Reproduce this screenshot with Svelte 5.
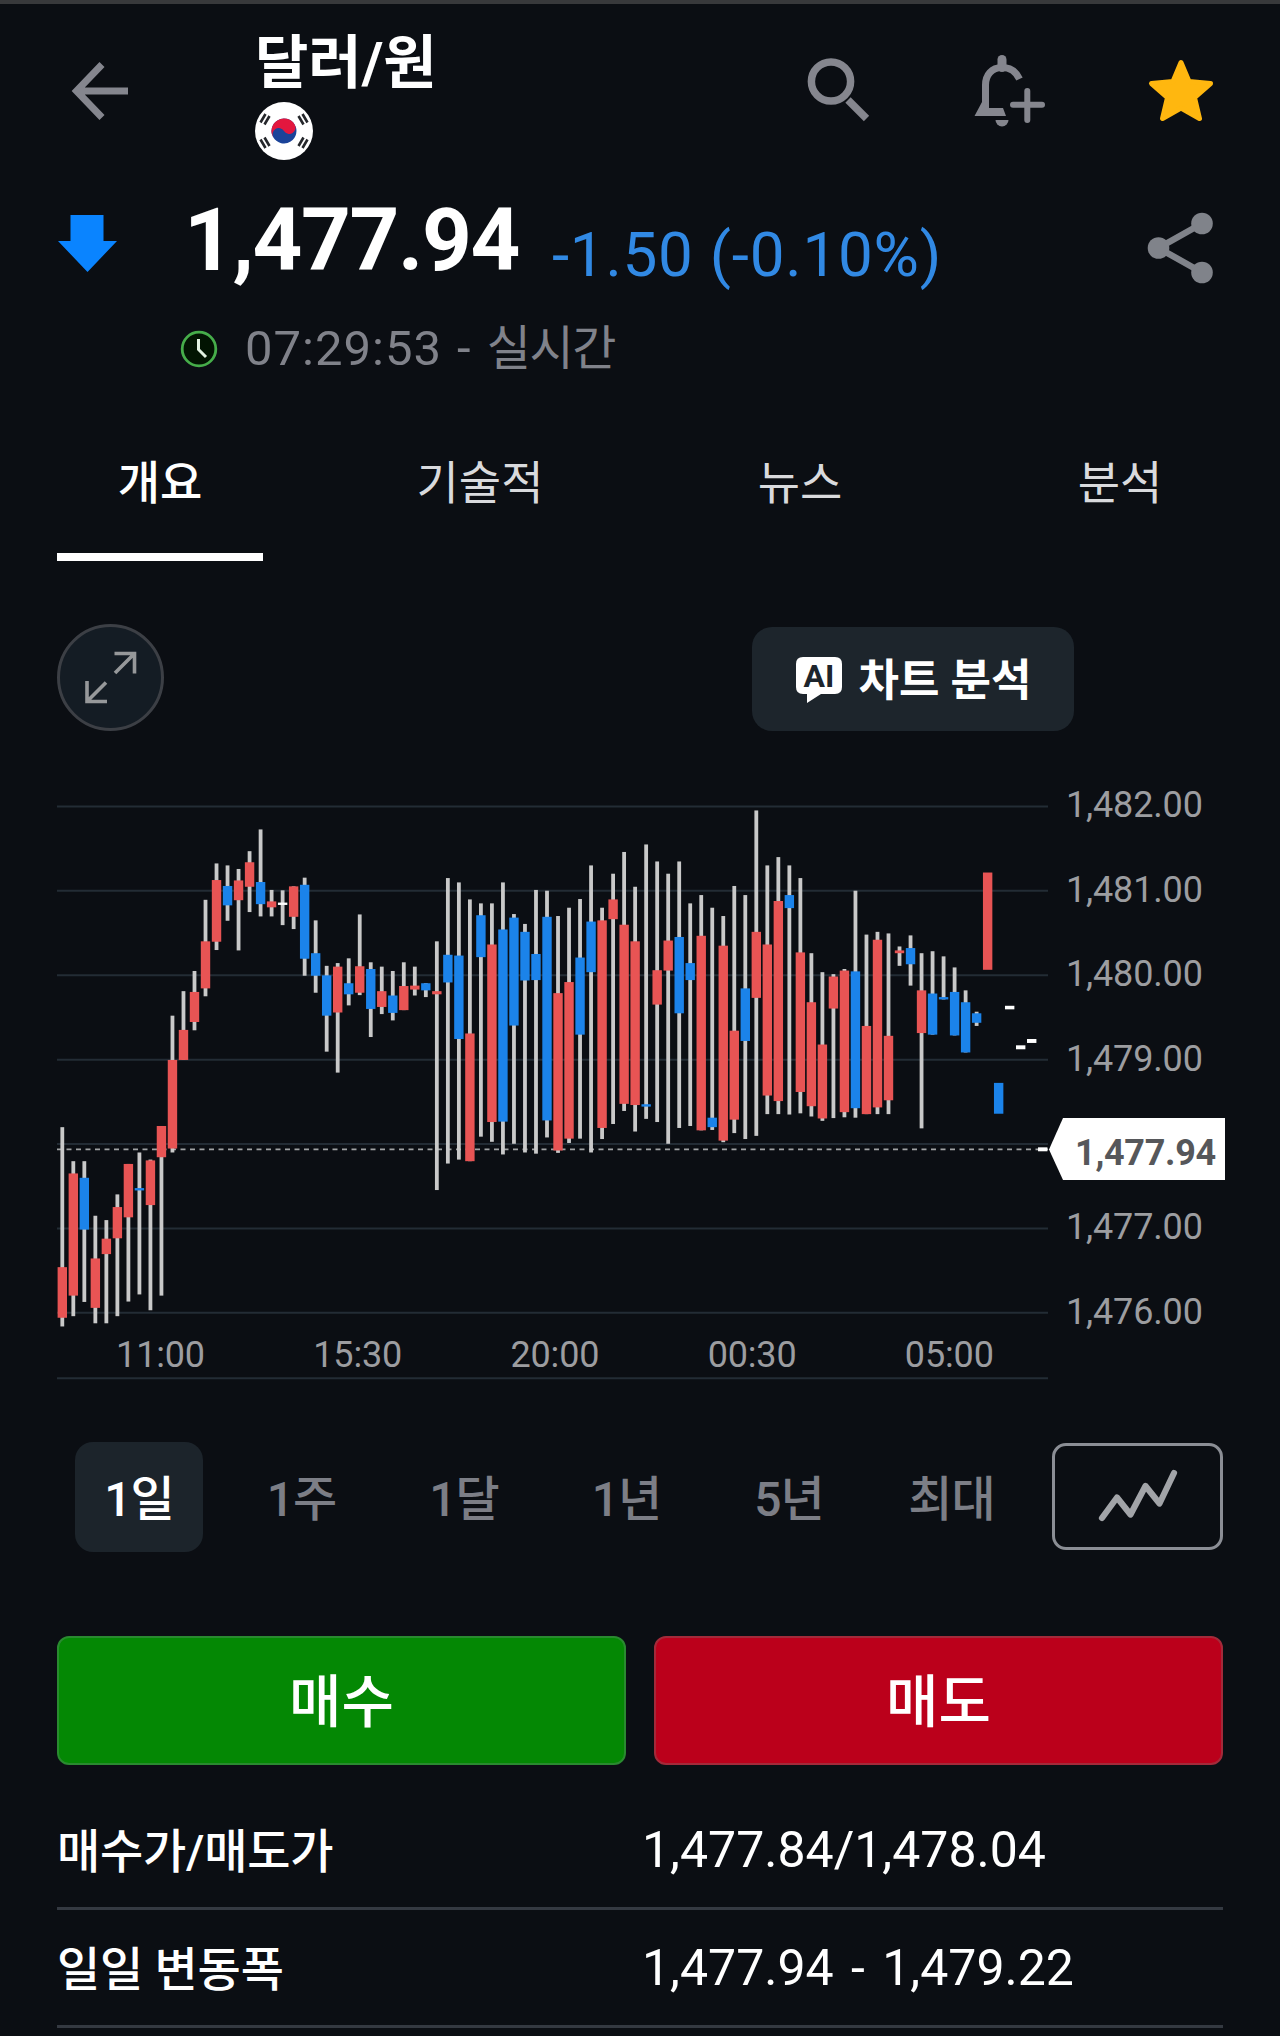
<script lang="ts">
  type Kind = 'up' | 'down' | 'flat';
  type Candle = [number, number, number, number, Kind];

  const tabs = ['개요', '기술적', '뉴스', '분석'];
  const periods = ['1일', '1주', '1달', '1년', '5년', '최대'];
  const rows = [
    { label: '매수가/매도가', value: '1,477.84/1,478.04' },
    { label: '일일 변동폭', value: '1,477.94 - 1,479.22' }
  ];

  let activeTab = $state('개요');
  let activePeriod = $state('1일');

  // high, body top, body bottom, low (plot units counted downwards, 213.4 = 1.00)
  const candles: Candle[] = [
    [878, 1232, 1360, 1382, 'up'],
    [964, 995, 1304, 1356, 'up'],
    [964, 1006, 1137, 1320, 'down'],
    [1102, 1210, 1335, 1374, 'up'],
    [1113, 1160, 1199, 1374, 'up'],
    [1048, 1080, 1159, 1356, 'up'],
    [971, 971, 1106, 1319, 'up'],
    [942, 1032, 1038, 1301, 'down'],
    [960, 962, 1075, 1341, 'up'],
    [875, 875, 954, 1304, 'up'],
    [596, 708, 932, 942, 'up'],
    [534, 632, 708, 708, 'up'],
    [483, 536, 612, 633, 'up'],
    [303, 408, 527, 547, 'up'],
    [211, 253, 409, 430, 'up'],
    [216, 268, 317, 356, 'down'],
    [225, 254, 304, 431, 'up'],
    [180, 208, 270, 334, 'up'],
    [125, 258, 314, 345, 'down'],
    [278, 307, 322, 345, 'up'],
    [279, 310, 316, 367, 'flat'],
    [269, 269, 346, 377, 'up'],
    [247, 265, 452, 495, 'down'],
    [355, 438, 495, 538, 'down'],
    [470, 494, 596, 687, 'down'],
    [463, 472, 588, 740, 'up'],
    [451, 514, 542, 570, 'down'],
    [340, 471, 538, 544, 'up'],
    [461, 478, 579, 650, 'down'],
    [472, 534, 574, 592, 'up'],
    [483, 545, 589, 608, 'down'],
    [461, 521, 582, 582, 'up'],
    [472, 520, 530, 545, 'up'],
    [514, 514, 532, 549, 'down'],
    [408, 534, 542, 1037, 'up'],
    [248, 442, 512, 970, 'down'],
    [259, 444, 655, 960, 'down'],
    [302, 641, 964, 964, 'up'],
    [312, 342, 448, 902, 'down'],
    [312, 416, 865, 915, 'up'],
    [259, 378, 864, 947, 'down'],
    [339, 348, 621, 920, 'down'],
    [364, 384, 507, 942, 'down'],
    [278, 440, 506, 945, 'down'],
    [280, 346, 861, 904, 'down'],
    [344, 539, 937, 943, 'up'],
    [323, 511, 907, 918, 'up'],
    [301, 449, 644, 907, 'down'],
    [216, 358, 486, 942, 'down'],
    [323, 355, 880, 908, 'up'],
    [237, 302, 352, 870, 'up'],
    [182, 366, 819, 837, 'up'],
    [270, 408, 822, 889, 'up'],
    [163, 820, 826, 857, 'down'],
    [206, 481, 568, 865, 'up'],
    [237, 406, 482, 920, 'up'],
    [206, 397, 590, 880, 'down'],
    [312, 463, 506, 875, 'down'],
    [291, 394, 886, 886, 'up'],
    [323, 854, 878, 885, 'down'],
    [344, 419, 912, 916, 'up'],
    [268, 634, 859, 893, 'up'],
    [291, 527, 660, 908, 'down'],
    [77, 384, 551, 900, 'up'],
    [216, 416, 798, 845, 'up'],
    [195, 306, 812, 845, 'up'],
    [216, 291, 324, 846, 'down'],
    [248, 436, 789, 843, 'up'],
    [438, 562, 825, 851, 'up'],
    [486, 669, 856, 862, 'up'],
    [491, 497, 578, 855, 'up'],
    [478, 482, 840, 853, 'up'],
    [280, 484, 830, 854, 'down'],
    [391, 622, 845, 845, 'up'],
    [384, 404, 828, 845, 'up'],
    [388, 647, 810, 845, 'up'],
    [421, 431, 438, 470, 'up'],
    [393, 425, 466, 520, 'down'],
    [438, 532, 640, 881, 'up'],
    [433, 540, 644, 644, 'down'],
    [446, 549, 555, 555, 'down'],
    [474, 536, 646, 646, 'down'],
    [532, 562, 689, 689, 'down'],
    [586, 590, 614, 622, 'down'],
    [234, 234, 480, 480, 'up'],
    [766, 766, 844, 844, 'down'],
    [571, 571, 580, 580, 'flat'],
    [671, 671, 681, 681, 'flat'],
    [655, 655, 665, 665, 'flat'],
    [929, 929, 939, 939, 'flat']
  ];

  const prices = [1482, 1481, 1480, 1479, 1478, 1477, 1476];
  const times = ['11:00', '15:30', '20:00', '00:30', '05:00'];

  const y = (v: number) => v / 2.529;
  const x = (i: number) => 62.3 + i * 11.016;
  const priceY = (p: number) => y(67 + (1482 - p) * 213.4);
</script>

<main class="screen">
  <header class="topbar">
    <button class="icon-btn back" aria-label="back">
      <svg width="60" height="60" viewBox="0 0 60 60" fill="none" stroke="#85868e" stroke-width="7">
        <path d="M58 30H6M32 3.500L6.500 30L32 56.500" />
      </svg>
    </button>
    <div class="title">
      <h1>달러/원</h1>
      <svg class="flag" width="58" height="58" viewBox="0 0 58 58">
        <circle cx="29" cy="29" r="29" fill="#fff" />
        <g transform="rotate(-32 29 29)">
          <circle cx="29" cy="29" r="12.500" fill="#1b4399" />
          <path d="M16.500 29a12.500 12.500 0 0 1 25 0a6.250 6.250 0 0 1-12.500 0a6.250 6.250 0 0 0-12.500 0z" fill="#e3173e" />
        </g>
        <g stroke="#25272b" stroke-width="2.600">
          <path d="M5.500 20.500l5-8.500M9.500 22.500l5-8.500" />
          <path d="M52.500 20.500l-5-8.500M48.500 22.500l-5-8.500" />
          <path d="M5.500 37.500l5 8.500M9.500 35.500l5 8.500" />
          <path d="M52.500 37.500l-5 8.500M48.500 35.500l-5 8.500" />
        </g>
      </svg>
    </div>
    <div class="actions">
      <button class="icon-btn" aria-label="search">
        <svg width="66" height="72" viewBox="0 0 66 72" fill="none" stroke="#85868e">
          <circle cx="27" cy="27.500" r="19.600" stroke-width="7.500" />
          <path d="M44 46L62.500 64.500" stroke-width="7.500" />
        </svg>
      </button>
      <button class="icon-btn" aria-label="alert">
        <svg width="76" height="76" viewBox="0 0 76 76" fill="none" stroke="#85868e">
          <path d="M32 5.500v8" stroke-width="9" stroke-linecap="round" />
          <path d="M49.500 25C46 17.500 40 13.500 32 13.500C21.500 13.500 15.500 21.500 15.500 31V56" stroke-width="7" />
          <path d="M12 48L4.500 62H36L33 54H18V48Z" fill="#85868e" stroke="none" />
          <path d="M25.500 66h13a6.500 6.500 0 0 1-13 0z" fill="#85868e" stroke="none" />
          <path d="M57.300 37v29M43 50.800h29" stroke-width="6" stroke-linecap="round" />
        </svg>
      </button>
      <button class="icon-btn" aria-label="favorite">
        <svg width="68" height="68" viewBox="0 0 68 68">
          <path d="M34 5.500L42 24.500L63.500 26.500L47.500 40.500L52.500 61.500L34 51L15.500 61.500L20.500 40.500L4.500 26.500L26 24.500Z" fill="#ffb70f" stroke="#ffb70f" stroke-width="5" stroke-linejoin="round" />
        </svg>
      </button>
    </div>
  </header>

  <section class="quote">
    <svg class="trend" width="61" height="57" viewBox="0 0 61 57">
      <path d="M13.500 0H46.500V26H60L30.500 57L1 26H13.500Z" fill="#0a84ff" />
    </svg>
    <div class="figures">
      <div class="price-line">
        <span class="price">1,477.94</span>
        <span class="change">-1.50 (-0.10%)</span>
      </div>
      <div class="status">
        <svg width="38" height="38" viewBox="0 0 38 38" fill="none">
          <circle cx="19" cy="19" r="16.800" fill="#021402" stroke="#46ad4a" stroke-width="2.800" />
          <path d="M18.500 9v10.500l7.500 7.500" stroke="#e2f0e2" stroke-width="3" />
        </svg>
        <span class="time">07:29:53 - <span class="live">실시간</span></span>
      </div>
    </div>
    <button class="icon-btn share" aria-label="share">
      <svg width="66" height="72" viewBox="0 0 66 72" stroke="#80838a" fill="#80838a">
        <path d="M55 11.500L11.500 36L55 60.500" fill="none" stroke-width="6.500" />
        <g stroke="none">
          <circle cx="55" cy="11.500" r="10.800" />
          <circle cx="11.500" cy="36" r="10.800" />
          <circle cx="55" cy="60.500" r="10.800" />
        </g>
      </svg>
    </button>
  </section>

  <nav class="tabs">
    {#each tabs as tab}
      <button class="tab" class:active={activeTab === tab} onclick={() => (activeTab = tab)}>
        <span>{tab}</span>
      </button>
    {/each}
  </nav>

  <div class="tools">
    <button class="expand" aria-label="expand">
      <svg width="60" height="70" viewBox="0 0 60 70" fill="none" stroke="#96989a" stroke-width="3.600">
        <path d="M33.500 10.500H53.500V30.500M53 11L34 30" />
        <path d="M6 38V58.500H26M6.500 58L25 39.500" />
      </svg>
    </button>
    <button class="ai">
      <svg width="48" height="50" viewBox="0 0 48 50">
        <path d="M8 3H40Q47 3 47 10V33Q47 40 40 40H26L12 49V40H8Q1 40 1 33V10Q1 3 8 3Z" fill="#fff" />
        <text class="ai-text" x="24" y="33" text-anchor="middle">AI</text>
      </svg>
      <span>차트 분석</span>
    </button>
  </div>

  <svg class="chart" width="1280" height="610" viewBox="0 0 1280 610">
    {#each prices as p}
      <line class="grid" x1="57" x2="1048" y1={priceY(p)} y2={priceY(p)} />
      {#if p !== 1478}
        <text class="axis" x="1066" y={priceY(p) + 11}>1,{p - 1000}.00</text>
      {/if}
    {/each}
    <line class="grid" x1="57" x2="1048" y1={y(1513)} y2={y(1513)} />
    <line class="current" x1="57" x2="1048" y1={y(934)} y2={y(934)} />

    {#each candles as [high, top, bottom, low, kind], i}
      {#if low > high && (high < top || low > bottom)}
        <rect class="wick" x={x(i) - 1.900} y={y(high)} width="3.800" height={y(low) - y(high)} />
      {/if}
      <rect class={kind} x={x(i) - 4.700} y={y(top)} width="9.400" height={y(bottom) - y(top)} />
    {/each}

    {#each times as t, i}
      <text class="axis" x={160.5 + i * 197.200} y="586.500" text-anchor="middle">{t}</text>
    {/each}

    <path d="M1049 369.500L1063 338H1225V400H1063Z" fill="#fff" />
    <text class="tag" x="1145.500" y="385" text-anchor="middle">1,477.94</text>
  </svg>

  <div class="periods">
    {#each periods as p}
      <button class="period" class:active={activePeriod === p} onclick={() => (activePeriod = p)}>{p}</button>
    {/each}
    <button class="line-btn" aria-label="chart type">
      <svg width="84" height="56" viewBox="0 0 84 56" fill="none" stroke="#a2a4a8" stroke-width="6.200" stroke-linecap="round" stroke-linejoin="round">
        <path d="M6 50L21 29.500L34.500 46.500L49.500 18L63.500 35.500L78 5" />
      </svg>
    </button>
  </div>

  <div class="trade">
    <button class="buy">매수</button>
    <button class="sell">매도</button>
  </div>

  <dl class="info">
    {#each rows as row}
      <div class="row">
        <dt>{row.label}</dt>
        <dd>{row.value}</dd>
      </div>
    {/each}
  </dl>
</main>

<style>
  :global(body) {
    background: #0b0e13;
  }

  .screen {
    box-sizing: border-box;
    width: 1280px;
    height: 2036px;
    overflow: hidden;
    border-top: 4px solid #38393b;
    background: #0b0e13;
    color: #fff;
    font-family: Roboto, 'Noto Sans CJK KR', sans-serif;
    display: flex;
    flex-direction: column;
  }

  button {
    margin: 0;
    padding: 0;
    border: 0;
    background: none;
    color: inherit;
    font: inherit;
    display: flex;
    align-items: center;
    justify-content: center;
  }

  svg {
    display: block;
    flex: none;
  }

  .topbar {
    height: 186px;
    display: flex;
    align-items: flex-start;
    box-sizing: border-box;
    padding: 28px 65px 0 70px;
    flex: none;
  }

  .back {
    margin-top: 29px;
  }

  .title {
    margin-left: 125px;
  }

  h1 {
    margin: 2px 0 9px;
    font-size: 58px;
    line-height: 59px;
    font-weight: 700;
    letter-spacing: 0;
  }

  .actions {
    margin-left: auto;
    display: flex;
    align-items: flex-start;
    padding-top: 22px;
  }

  .actions .icon-btn:nth-child(2) {
    margin-left: 100px;
  }

  .actions .icon-btn:nth-child(3) {
    margin: 3px 0 0 101px;
  }

  .quote {
    height: 218px;
    display: flex;
    align-items: flex-start;
    padding: 0 67px 0 57px;
    flex: none;
  }

  .trend {
    margin-top: 25px;
  }

  .figures {
    margin-left: 62px;
    flex: 1;
  }

  .price-line {
    display: flex;
    align-items: flex-start;
    height: 124px;
    white-space: nowrap;
  }

  .price {
    padding-left: 4px;
    font-size: 87px;
    line-height: 100px;
    font-weight: 700;
    letter-spacing: -1.4px;
  }

  .change {
    margin: 29px 0 0 33px;
    font-size: 62px;
    line-height: 72px;
    letter-spacing: 0.75px;
    color: #3189e4;
  }

  .status {
    display: flex;
    align-items: center;
    gap: 27px;
    height: 70px;
    font-size: 49px;
    color: #80828a;
  }

  .time {
    margin-top: -10px;
    letter-spacing: 1px;
    word-spacing: 2px;
  }

  .live {
    font-size: 48px;
    letter-spacing: -1.4px;
  }

  .share {
    margin-top: 22px;
  }

  .tabs {
    display: flex;
    height: 153px;
    flex: none;
  }

  .tab {
    width: 320px;
    font-size: 46px;
    color: #d9dadd;
  }

  .tab span {
    box-sizing: border-box;
    width: 206px;
    height: 153px;
    padding-top: 38px;
    border-bottom: 8px solid transparent;
  }

  .tab.active {
    color: #fff;
    font-weight: 500;
  }

  .tab.active span {
    border-color: #fff;
  }

  .tools {
    display: flex;
    justify-content: space-between;
    align-items: center;
    margin-top: 63px;
    padding: 0 206px 0 57px;
    height: 107px;
    flex: none;
  }

  .expand {
    box-sizing: border-box;
    width: 107px;
    height: 107px;
    border: 3px solid #3c3f45;
    border-radius: 50%;
    background: #141c24;
  }

  .ai {
    width: 322px;
    height: 104px;
    margin-top: 2px;
    gap: 16px;
    border-radius: 20px;
    background: #1d252c;
    font-size: 44px;
    font-weight: 700;
  }

  .ai span {
    margin-top: -3px;
  }

  .ai-text {
    font-size: 32px;
    font-weight: 700;
    fill: #1d252c;
  }

  .chart {
    margin-top: 49px;
  }

  .grid {
    stroke: #232c35;
    stroke-width: 2;
  }

  .current {
    stroke: #a0a2a4;
    stroke-width: 1.8;
    stroke-dasharray: 5 4.500;
  }

  .wick {
    fill: #c9c9c9;
  }

  .up {
    fill: #e85454;
  }

  .down {
    fill: #1b83ea;
  }

  .flat {
    fill: #fff;
  }

  .axis {
    font-size: 36px;
    letter-spacing: -0.15px;
    fill: #9c9da0;
  }

  .tag {
    font-size: 36px;
    font-weight: 700;
    letter-spacing: -0.3px;
    fill: #56575a;
  }

  .periods {
    display: flex;
    align-items: center;
    margin-top: 52px;
    padding: 0 57px 0 75px;
    height: 110px;
    flex: none;
  }

  .period {
    box-sizing: border-box;
    width: 128px;
    height: 110px;
    margin-right: 34.5px;
    padding-bottom: 5px;
    border-radius: 18px;
    color: #7c7e86;
    font-size: 48px;
    font-weight: 500;
    letter-spacing: -1px;
  }

  .period.active {
    background: #1c242b;
    color: #fff;
  }

  .line-btn {
    box-sizing: border-box;
    width: 171px;
    height: 107px;
    margin: 0 0 2px auto;
    border: 3px solid #8b8e95;
    border-radius: 14px;
  }

  .trade {
    display: grid;
    grid-template-columns: 1fr 1fr;
    gap: 28px;
    margin-top: 84px;
    padding: 0 57px;
    height: 129px;
    flex: none;
  }

  .buy,
  .sell {
    padding-bottom: 7px;
    border: 2px solid #2a8a30;
    border-radius: 12px;
    background: #048804;
    font-size: 57px;
    font-weight: 500;
  }

  .sell {
    border-color: #a32a3a;
    background: #bb001b;
  }

  .info {
    margin: 27px 57px 0;
  }

  .row {
    box-sizing: border-box;
    height: 118px;
    display: grid;
    grid-template-columns: 585px 1fr;
    align-items: center;
    border-bottom: 3px solid #343941;
    font-size: 47px;
  }

  dt {
    margin-top: -5px;
    font-weight: 500;
    letter-spacing: -0.2px;
  }

  dd {
    margin: 0;
    font-size: 50px;
    word-spacing: 5px;
  }
</style>
